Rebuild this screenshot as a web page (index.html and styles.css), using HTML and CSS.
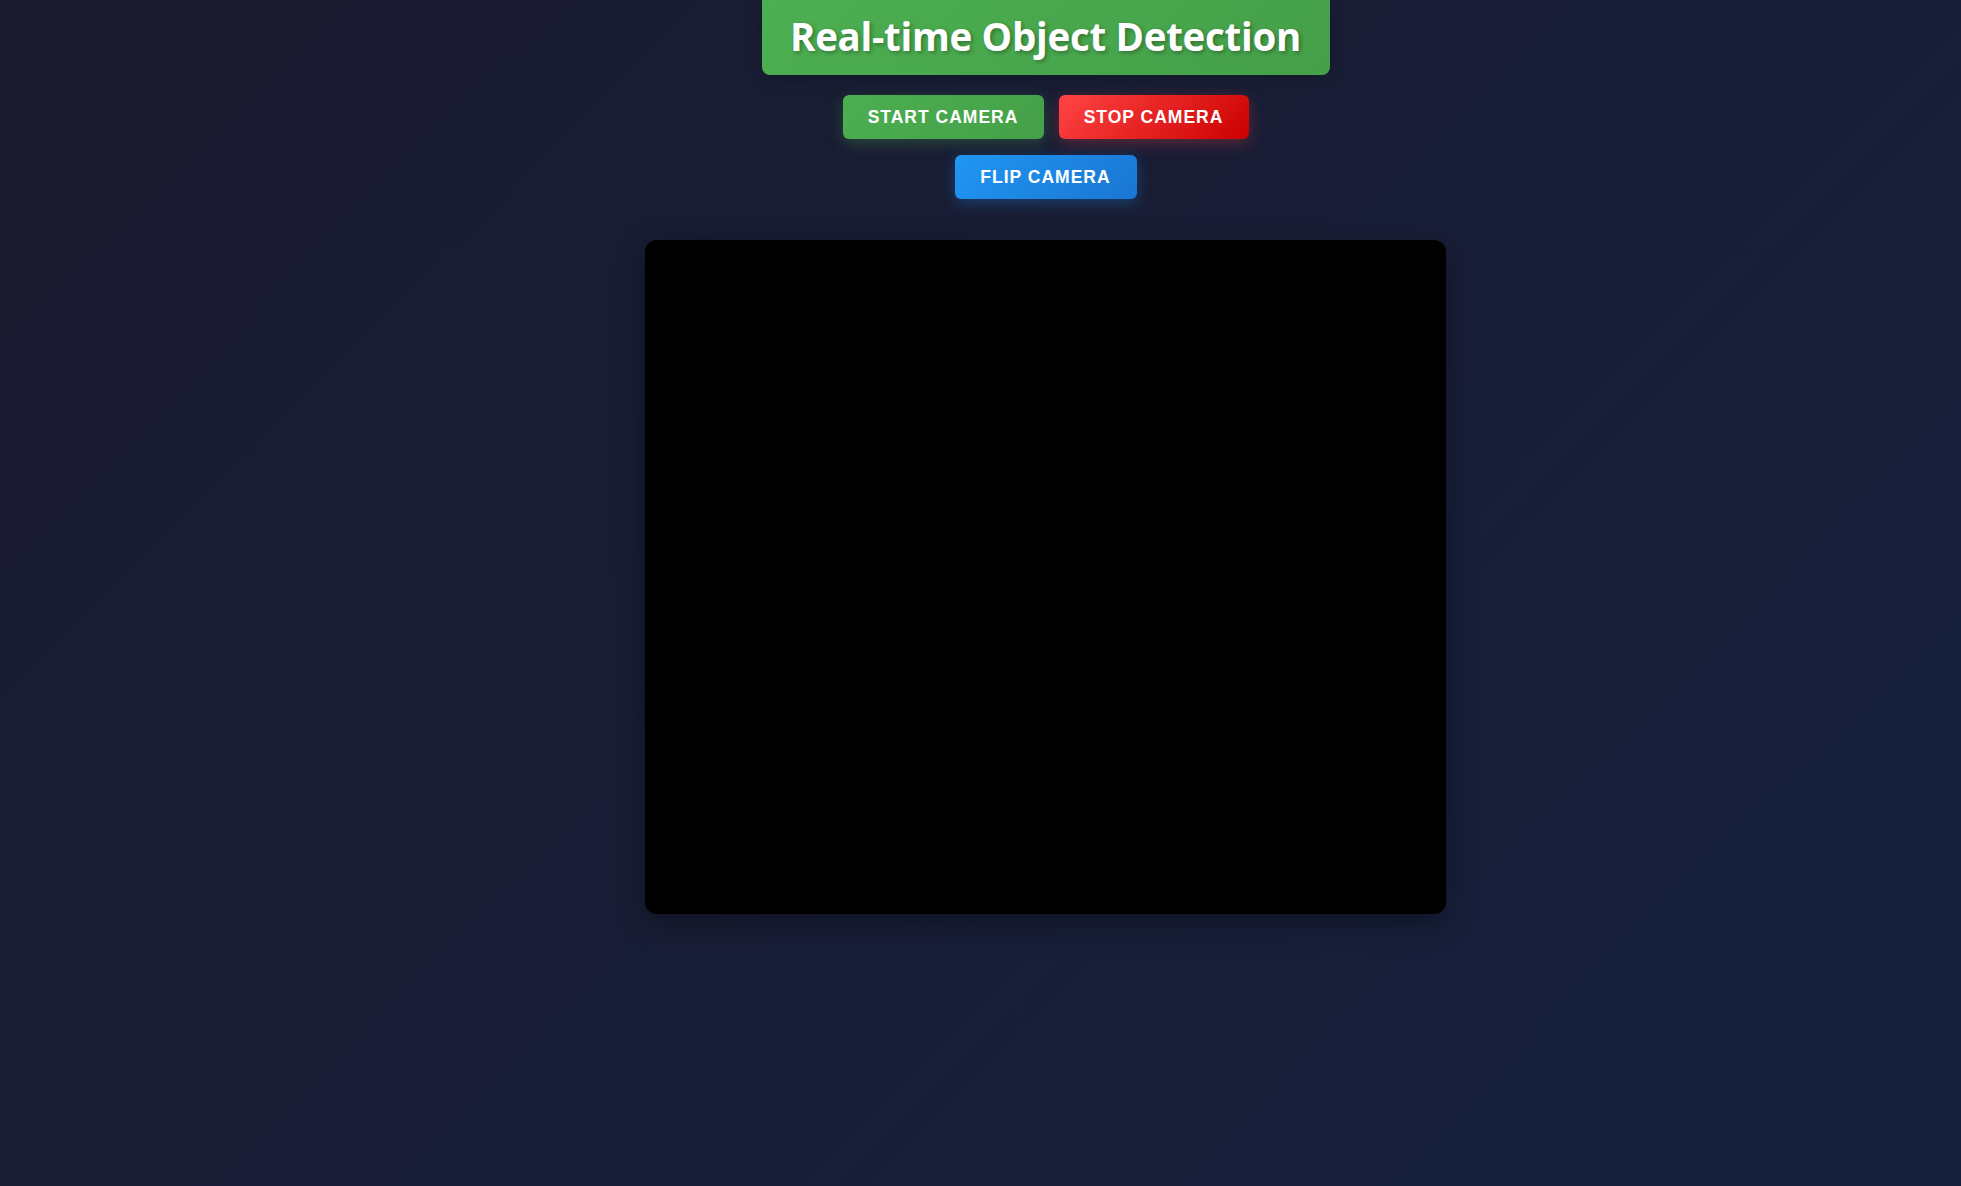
FILE: index.html
```html
<!DOCTYPE html>
<html lang="en">
<head>
<meta charset="utf-8">
<title>Real-time Object Detection</title>
<link rel="stylesheet" href="styles.css">
</head>
<body>
<div class="page">
  <h1 class="title">Real-time Object Detection</h1>
  <div class="controls">
    <button class="btn btn-start">Start Camera</button>
    <button class="btn btn-stop">Stop Camera</button>
  </div>
  <div class="controls controls-second">
    <button class="btn btn-flip">Flip Camera</button>
  </div>
  <div class="video-box"></div>
</div>
</body>
</html>
```

FILE: styles.css
```css
html, body {
  margin: 0;
  padding: 0;
}
body {
  min-height: 100vh;
  background: linear-gradient(135deg, #1a1a2e 0%, #16213e 100%);
  font-family: "Open Sans", "Liberation Sans", sans-serif;
  color: #fff;
}
.page {
  display: flex;
  flex-direction: column;
  align-items: center;
  padding-left: 130px;
}
.title {
  margin: 0;
  width: 568px;
  height: 75px;
  box-sizing: border-box;
  padding: 0 0 4px;
  display: flex;
  align-items: center;
  justify-content: center;
  background: linear-gradient(135deg, #4caf50, #45a049);
  border-radius: 0 0 8px 8px;
  font-size: 38.5px;
  font-weight: 700;
  letter-spacing: -0.3px;
  white-space: nowrap;
  text-shadow: 2px 2px 4px rgba(0, 0, 0, 0.3);
  box-shadow: 0 4px 15px rgba(0, 0, 0, 0.15);
}
.controls {
  display: flex;
  gap: 15px;
  margin-top: 20px;
}
.controls-second {
  margin-top: 16px;
}
.btn {
  border: none;
  border-radius: 6px;
  padding: 0;
  height: 44px;
  color: #fff;
  font-family: "Liberation Sans", Arial, sans-serif;
  font-size: 17.5px;
  font-weight: 700;
  text-transform: uppercase;
  letter-spacing: 1px;
  cursor: pointer;
}
.btn-start {
  width: 201px;
  background: linear-gradient(135deg, #4caf50, #45a049);
  box-shadow: 0 4px 15px rgba(76, 175, 80, 0.3);
}
.btn-stop {
  width: 190px;
  background: linear-gradient(135deg, #ff4444, #cc0000);
  box-shadow: 0 4px 15px rgba(255, 68, 68, 0.3);
}
.btn-flip {
  width: 182px;
  background: linear-gradient(135deg, #2196f3, #1976d2);
  box-shadow: 0 4px 15px rgba(33, 150, 243, 0.3);
}
.video-box {
  margin-top: 41px;
  width: 801px;
  height: 674px;
  background: #000;
  border-radius: 12px;
  box-shadow: 0 10px 30px rgba(0, 0, 0, 0.35);
}
```
